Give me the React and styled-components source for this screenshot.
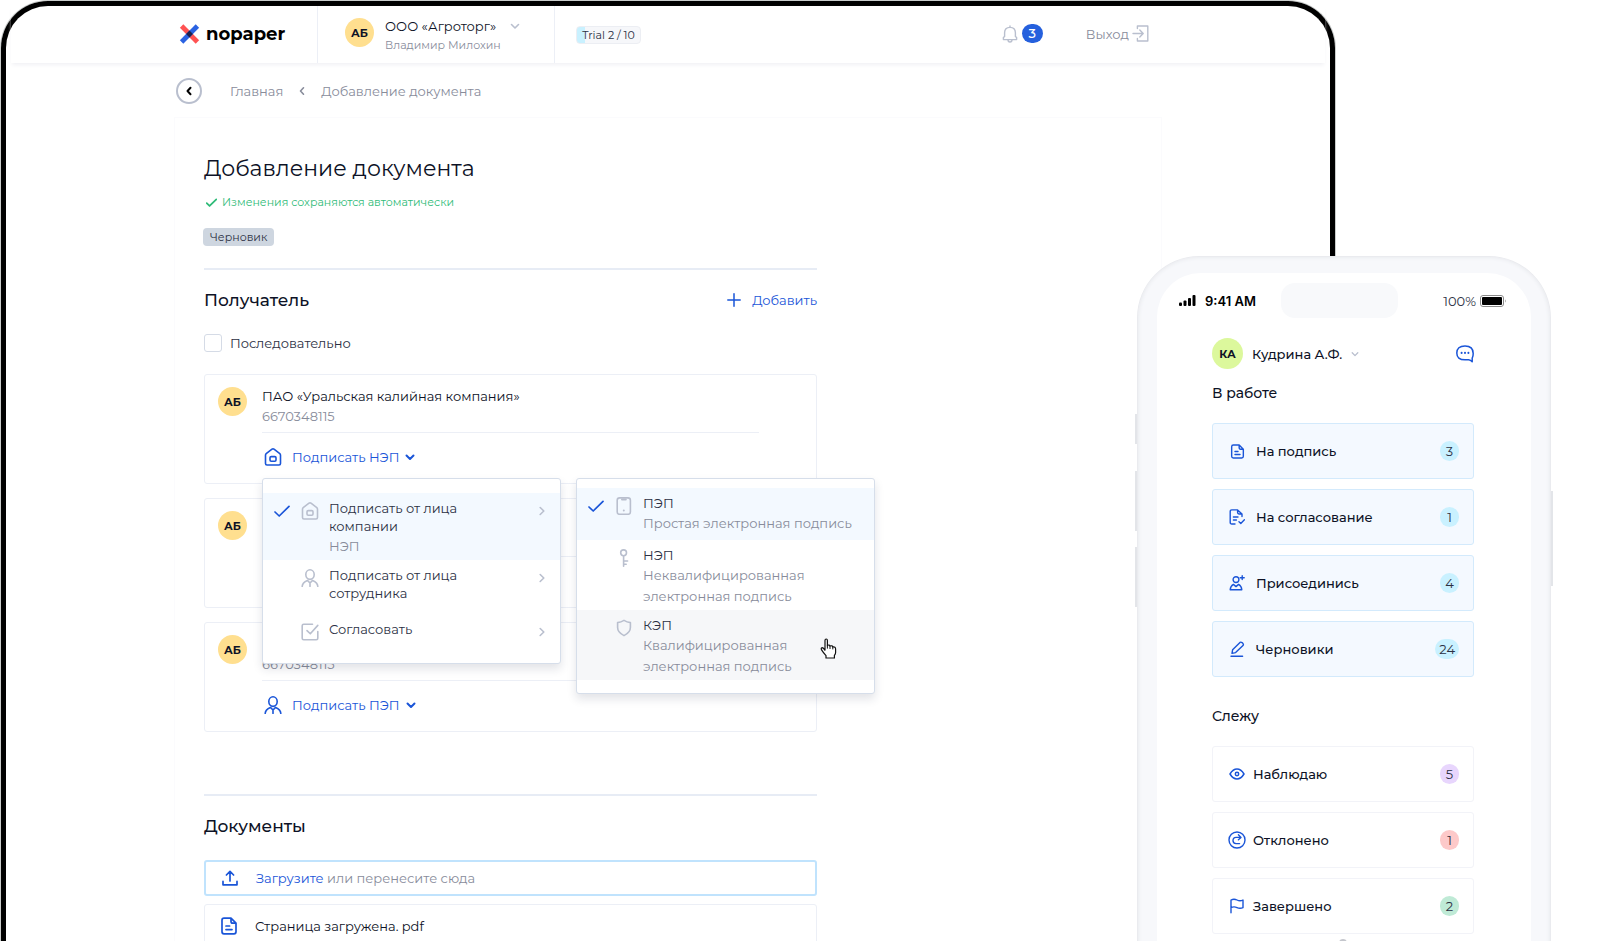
import React from "react";
import styled, { createGlobalStyle, css } from "styled-components";

const color = {
  ink: "#0d1226",
  text: "#2b3043",
  muted: "#888c9b",
  icon: "#b9bfce",
  blue: "#1a55d8",
  line: "#eceff6",
  green: "#2fbb78",
};

const GlobalStyle = createGlobalStyle`
  *, *::before, *::after { box-sizing: border-box; }
  body {
    margin: 0;
    background: #fff;
    color: ${color.ink};
    font-family: Montserrat, Inter, "Open Sans", sans-serif;
    font-size: 13px;
    line-height: 20px;
  }
  h1, h2, h3, p, ul { margin: 0; padding: 0; font-weight: 400; }
  ul { list-style: none; }
  button { font: inherit; color: inherit; background: none; border: 0; padding: 0; cursor: pointer; text-align: left; }
  a { color: inherit; text-decoration: none; }
  svg { display: block; flex: none; }
`;

/* ---------- icons ---------- */

const Glyph = styled.svg.attrs({ "aria-hidden": true })`
  fill: none;
  stroke: currentColor;
  stroke-width: ${(p) => p.$weight || 1.6};
  stroke-linecap: round;
  stroke-linejoin: round;
`;

const Icon = ({ size = 18, box = 18, weight, children }) => (
  <Glyph width={size} height={size} viewBox={`0 0 ${box} ${box}`} $weight={weight}>
    {children}
  </Glyph>
);

const LogoMark = () => (
  <svg width="21" height="20" viewBox="0 0 21 20" aria-hidden="true">
    <path d="M2.6 2 18.4 18" stroke="#ff5252" strokeWidth="4.8" strokeLinecap="butt" />
    <path d="M18.4 2 2.6 18" stroke="#2a62e2" strokeWidth="4.8" strokeLinecap="butt" />
    <path d="M10.5 6.6 13.9 10 10.5 13.4 7.1 10Z" fill="#1c2150" />
  </svg>
);

const Chevron = ({ dir = "down", size = 10, weight = 1.6 }) => {
  const paths = {
    down: "M1.5 3.5 5 7 8.5 3.5",
    left: "M6.5 1.8 3.5 5 6.5 8.2",
    right: "M3.2 1.5 6.8 5 3.2 8.5",
  };
  return (
    <Icon size={size} box={10} weight={weight}>
      <path d={paths[dir]} />
    </Icon>
  );
};

const Check = ({ size = 16, weight = 1.7 }) => (
  <Icon size={size} box={16} weight={weight}>
    <path d="M1 9 5.2 13 15 3.4" />
  </Icon>
);

const House = () => (
  <Icon>
    <path d="M1.5 7.2Q1.5 6.3 2.2 5.7L8 1.2Q9 .5 10 1.2L15.8 5.7Q16.5 6.3 16.5 7.2V15.5Q16.5 17 15 17H3Q1.5 17 1.5 15.5Z" />
    <rect x="6" y="8.6" width="6" height="4.6" rx="1.2" />
  </Icon>
);

const Person = () => (
  <Icon>
    <ellipse cx="9" cy="5.6" rx="4.2" ry="4.8" />
    <path d="M1.2 17.4Q1.4 13.4 6.4 11.4L9 14 11.6 11.4Q16.6 13.4 16.8 17.4M9 14V17.4" />
  </Icon>
);

const TickBox = () => (
  <Icon>
    <path d="M11.5 1.2H2.7Q1.2 1.2 1.2 2.7V15.3Q1.2 16.8 2.7 16.8H15.3Q16.8 16.8 16.8 15.3V8.5M6 7.6 9.3 10.8 16.8 2.4" />
  </Icon>
);

const PhoneGlyph = () => (
  <Icon>
    <rect x="2.2" y=".9" width="13.2" height="16.4" rx="2.4" />
    <path d="M7 2.4H10.8M8.8 13.4V13.5" strokeWidth="2" />
  </Icon>
);

const KeyGlyph = () => (
  <Icon>
    <circle cx="8.6" cy="3.8" r="2.9" />
    <path d="M8.6 6.8V17.2M8.6 12H12.6M8.6 15.2H11.2" />
  </Icon>
);

const ShieldGlyph = () => (
  <Icon>
    <path d="M9 1.4Q12 3.2 15.4 3.6V8.6Q15.4 13.6 9 16.6Q2.6 13.6 2.6 8.6V3.6Q6 3.2 9 1.4Z" />
  </Icon>
);

const DocGlyph = ({ size = 18 }) => (
  <Icon size={size} weight={1.7}>
    <path d="M11 1.2H4Q2 1.2 2 3.2V14.8Q2 16.8 4 16.8H14Q16 16.8 16 14.8V6.2L11 1.2V4.6Q11 6.2 12.6 6.2H16M6 9H9.6M6 12.6H12" />
  </Icon>
);

const UploadGlyph = () => (
  <Icon size={16} box={16} weight={1.7}>
    <path d="M8 11V1.6M4.4 5 8 1.4 11.6 5M1 11.4V14.8H15V11.4" />
  </Icon>
);

const BellGlyph = () => (
  <Icon size={18} weight={1.4}>
    <path d="M9 1V2.4M2.4 14.6V12.6L3.6 11.4V7.8Q3.6 2.4 9 2.4T14.4 7.8V11.4L15.6 12.6V14.6ZM7 14.8Q7 17 9 17T11 14.8" />
  </Icon>
);

const ExitGlyph = () => (
  <Icon size={17} box={17} weight={1.4}>
    <path d="M5.4 3.6V1H15.8V16H5.4V13.4M1 8.5H11M7.8 5 11.2 8.5 7.8 12" />
  </Icon>
);

const PlusGlyph = () => (
  <Icon size={14} box={14} weight={1.5}>
    <path d="M7 .8V13.2M.8 7H13.2" />
  </Icon>
);

const DocCheckGlyph = () => (
  <Icon size={16} box={16} weight={1.4}>
    <path d="M6 15H2.8Q1.2 15 1.2 13.4V2.4Q1.2.9 2.8.9H8.6L13 5V7.6M8.6.9V3.6Q8.6 5 10 5H13M4.4 8H9M4.4 11H7.4M10 12.8 11.8 14.4 15.4 10.8" />
  </Icon>
);

const AddPersonGlyph = () => (
  <Icon size={16} box={16} weight={1.4}>
    <circle cx="7" cy="4.6" r="2.9" />
    <path d="M13.2.8V4.6M11.2 2.7H15.2M4.4 9.4Q1.4 11 1.2 14.8H12.8Q12.6 11 9.6 9.4L7 11.6Z" />
  </Icon>
);

const PencilGlyph = () => (
  <Icon size={16} box={16} weight={1.4}>
    <path d="M2 15.2H13.6M3.6 8.8 11 1.4Q12 .8 13 1.6L14 2.6Q14.8 3.6 14 4.4L6.6 11.6 3 12.4Z" />
  </Icon>
);

const EyeGlyph = () => (
  <Icon size={16} box={16} weight={1.5}>
    <path d="M1 8Q4 3 8 3T15 8Q12 13 8 13T1 8Z" />
    <circle cx="8" cy="8" r="1.7" />
  </Icon>
);

const RedoGlyph = () => (
  <Icon size={18} weight={1.4}>
    <circle cx="9" cy="9" r="8" />
    <path d="M11.6 12.6H8Q5 12.4 5 9.4T8 6.4H12.6M10.4 3.8 13 6.4 10.4 8.8" />
  </Icon>
);

const FlagGlyph = () => (
  <Icon size={16} box={16} weight={1.4}>
    <path d="M2 14.8V2Q5 .4 8 2T14 2V9.6Q11 11 8 9.6T2 9.6" />
  </Icon>
);

const ChatGlyph = () => (
  <Icon size={18} weight={1.5}>
    <path d="M16.2 16.8V13.2Q17.2 11.4 17.2 8.4Q17.2 1 9 1T.8 8Q.8 14.8 9 14.8H12.6Q14.6 15 16.2 16.8Z" />
    <path d="M5.6 7.8V7.9M9 7.8V7.9M12.4 7.8V7.9" strokeWidth="2" />
  </Icon>
);

const SignalGlyph = () => (
  <svg width="17" height="11" viewBox="0 0 17 11" aria-hidden="true">
    <rect x="0" y="7.5" width="3" height="3.5" rx="1" />
    <rect x="4.5" y="5.5" width="3" height="5.5" rx="1" />
    <rect x="9" y="3" width="3" height="8" rx="1" />
    <rect x="13.5" y="0" width="3" height="11" rx="1" />
  </svg>
);

const BatteryGlyph = () => (
  <svg width="27" height="12" viewBox="0 0 27 12" aria-hidden="true">
    <rect x=".5" y=".5" width="23" height="11" rx="2.5" fill="none" stroke="#8a8a8a" />
    <rect x="2" y="2" width="20" height="8" rx="1" />
    <path d="M25 4.2Q26.6 6 25 7.8Z" fill="#8a8a8a" />
  </svg>
);

const HandCursor = styled((props) => (
  <svg width="17" height="21" viewBox="0 0 17 21" aria-hidden="true" {...props}>
    <path
      d="M5 12.6V2.4Q5 1 6.2 1T7.4 2.4V7.4Q9.6 6.4 10 8Q12.4 7.2 12.8 9Q15.6 8.4 15.6 11V14.4Q15.6 16 14.4 17.4V20H6V17.6Q3.4 14.8 1.4 11.6Q.8 10 2.2 9.6Q3.6 9.6 5 12.6Z"
      fill="#fff"
      stroke="#111"
      strokeWidth="1.2"
    />
    <path d="M7.4 7.4V10.6M10 8V11M12.8 9V11.4" stroke="#111" />
  </svg>
))`
  position: absolute;
  right: 37px;
  top: 28px;
`;

/* ---------- shared parts ---------- */

const Avatar = styled.span`
  display: flex;
  align-items: center;
  justify-content: center;
  flex: none;
  width: ${(p) => p.$size || 29}px;
  height: ${(p) => p.$size || 29}px;
  border-radius: 50%;
  background: ${(p) => p.$bg || "#ffdf8f"};
  font-size: 11px;
  font-weight: 700;
`;

/* ---------- stage ---------- */

const Stage = styled.div`
  display: grid;
  grid-template-columns: minmax(0, 1fr) 198px 216px;
  height: 100vh;
  padding: 0 49px 0 1px;
  overflow: hidden;
`;

const Tablet = styled.div`
  grid-area: 1 / 1 / 2 / 3;
  margin-top: 1px;
  border: 5px solid #000;
  border-bottom: 0;
  border-radius: 47px 47px 0 0;
  box-shadow: 0 0 0 1px #c9cccb;
`;

const TopBar = styled.header`
  display: flex;
  height: 57px;
  margin: 0 5px;
  padding: 0 163px 0 164px;
  box-shadow: 0 3px 4px -1px #f1f1f5;
`;

const Brand = styled.a`
  display: flex;
  align-items: center;
  gap: 6px;
  width: 143px;
  padding: 0 0 2px 4px;
  border-right: 1px solid ${color.line};
  color: #000;
  font-size: 18px;
  font-weight: 700;
`;

const OrgSwitch = styled.button`
  display: flex;
  align-items: center;
  gap: 11px;
  width: 237px;
  padding: 0 0 4px 27px;
  border-right: 1px solid ${color.line};
`;

const OrgText = styled.span`
  display: flex;
  flex-direction: column;
  padding-top: 4px;
`;

const OrgName = styled.span`
  display: flex;
  align-items: center;
  gap: 14px;

  svg { color: ${color.icon}; }
`;

const OrgUser = styled.small`
  font-size: 11px;
  line-height: 18px;
  color: ${color.muted};
`;

const Trial = styled.span`
  align-self: center;
  margin-left: 21px;
  width: 65px;
  border: 1px solid #eceef3;
  border-radius: 4px;
  background: linear-gradient(90deg, #c9f1ff 8px, #f6f7fa 8px);
  font-size: 11px;
  line-height: 16px;
  text-align: center;
  color: ${color.text};
`;

const TopActions = styled.div`
  display: flex;
  align-items: center;
  gap: 43px;
  margin: 0 13px 0 auto;
  padding-bottom: 2px;
  color: ${color.muted};

  svg { color: ${color.icon}; }
`;

const TopButton = styled.button`
  display: flex;
  align-items: center;
  gap: 3px;
`;

const Unread = styled.span`
  width: 21px;
  border-radius: 10px;
  background: #2560dd;
  color: #fff;
  font-weight: 500;
  line-height: 19px;
  text-align: center;
`;

const Crumbs = styled.nav`
  display: flex;
  align-items: center;
  margin: 15px 168px 13px 170px;
  gap: 14px;
  color: ${color.muted};

  > svg { color: ${color.muted}; }
`;

const BackButton = styled.button`
  display: flex;
  align-items: center;
  justify-content: center;
  width: 26px;
  height: 26px;
  margin-right: 14px;
  border: 2px solid ${color.icon};
  border-radius: 50%;

  svg { color: #000; }
`;

const Sheet = styled.main`
  margin: 0 168px;
  padding: 35px 29px;
  border: 1px solid #fbfbfd;
  border-bottom: 0;
`;

const Column = styled.div`
  max-width: 613px;
`;

const Title = styled.h1`
  font-size: 22px;
  line-height: 32px;
`;

const Saved = styled.p`
  display: flex;
  align-items: center;
  gap: 5px;
  margin-top: 9px;
  padding-left: 2px;
  font-size: 11px;
  line-height: 16px;
  color: ${color.green};
`;

const Draft = styled.span`
  display: inline-block;
  margin: 18px 0 0 -1px;
  padding: 0 7px;
  border-radius: 4px;
  background: #ced6e0;
  font-size: 11px;
  line-height: 18px;
  color: ${color.text};
  vertical-align: top;
`;

const Section = styled.section`
  margin-top: ${(p) => p.$gap}px;
  border-top: 2px solid #e7ecf5;
  padding-top: 18px;
`;

const SectionHead = styled.div`
  display: flex;
  justify-content: space-between;
  align-items: center;
  margin-bottom: 22px;
`;

const SectionTitle = styled.h2`
  font-size: 17px;
  font-weight: 500;
  line-height: 24px;
`;

const AddButton = styled.button`
  display: flex;
  align-items: center;
  gap: 11px;
  color: ${color.blue};
`;

const CheckLabel = styled.label`
  display: flex;
  align-items: center;
  gap: 8px;
  height: 18px;
  margin-bottom: 22px;
  color: ${color.text};
`;

const Checkbox = styled.input`
  appearance: none;
  width: 18px;
  height: 18px;
  margin: 0;
  border: 1px solid #d5dbe6;
  border-radius: 3px;
  background: #fff;
`;

const Recipients = styled.ul`
  display: grid;
  gap: 14px;
`;

const Recipient = styled.li`
  display: flex;
  gap: 15px;
  padding: 11px 57px 16px 13px;
  border: 1px solid ${color.line};
  border-radius: 3px;

  > ${Avatar} { margin-top: 1px; }
`;

const RecipientBody = styled.div`
  flex: 1;
`;

const RecipientInfo = styled.div`
  padding-bottom: 6px;
  border-bottom: 1px solid ${color.line};
`;

const Inn = styled.p`
  color: ${color.muted};
`;

const SignArea = styled.div`
  position: relative;
  margin-top: 14px;
`;

const SignButton = styled.button`
  display: flex;
  align-items: center;
  gap: 6px;
  height: 20px;
  padding-left: 2px;
  color: ${color.blue};

  > svg:first-child { margin-right: 4px; }
`;

const Menu = styled.div`
  position: absolute;
  z-index: 2;
  top: 31px;
  left: ${(p) => p.$left}px;
  width: 299px;
  padding: ${(p) => p.$top}px 0 13px;
  border: 1px solid #d6deea;
  border-radius: 3px;
  background: #fff;
  box-shadow: 0 5px 10px rgba(30, 40, 70, 0.13);
`;

const MenuItem = styled.button`
  position: relative;
  display: grid;
  grid-template-columns: 16px 18px 1fr auto;
  align-items: start;
  width: 100%;
  min-height: ${(p) => p.$min}px;
  padding: 6px 13px 3px 11px;
  color: ${color.icon};
  ${(p) => p.$tone && css`background: ${p.$tone};`}
`;

const MenuCheck = styled.span`
  padding-top: 4px;
  color: ${color.blue};
`;

const MenuIcon = styled.span`
  margin-left: 11px;
  padding-top: 3px;
`;

const MenuText = styled.span`
  margin-left: 21px;
  line-height: 18px;
  color: ${color.text};
`;

const MenuNote = styled.small`
  display: block;
  margin-top: 1px;
  font-size: 13px;
  line-height: 21px;
  color: ${color.muted};
`;

const MenuArrow = styled.span`
  padding-top: 7px;
`;

const FileRow = styled.div`
  display: flex;
  align-items: center;
  gap: 17px;
  height: ${(p) => (p.$drop ? 36 : 44)}px;
  margin-top: ${(p) => (p.$drop ? 0 : 8)}px;
  padding-left: 15px;
  border: ${(p) => (p.$drop ? "2px solid #c0e3fd" : `1px solid ${color.line}`)};
  border-radius: 3px;

  > svg { width: 18px; color: ${color.blue}; }
`;

const Hint = styled.p`
  color: ${color.muted};
`;

const LinkButton = styled.button`
  color: ${color.blue};
`;

/* ---------- phone ---------- */

const Phone = styled.aside`
  position: relative;
  z-index: 3;
  grid-area: 1 / 2 / 2 / 4;
  margin-top: 256px;
  padding: 16px 19px 0;
  border: 1px solid #eaebef;
  border-bottom: 0;
  border-radius: 62px 62px 0 0;
  background: #f7f8fb;
  box-shadow: inset 0 0 4px #e4e6ea;
`;

const SideKey = styled.span`
  position: absolute;
  top: ${(p) => p.$top}px;
  ${(p) => p.$side}: -3px;
  width: 2px;
  height: ${(p) => p.$length}px;
  background: #e3e5e9;
`;

const Screen = styled.div`
  height: 100%;
  padding-top: 10px;
  border-radius: 44px 44px 0 0;
  background: #fff;
`;

const StatusBar = styled.div`
  display: grid;
  grid-template-columns: 102px 117px 1fr;
  align-items: center;
  padding: 0 24px 0 22px;
`;

const Clock = styled.span`
  display: flex;
  align-items: center;
  gap: 9px;
  color: #000;
  font-family: Inter, Roboto, sans-serif;
  font-size: 13px;
  font-weight: 600;
  white-space: nowrap;
`;

const Island = styled.span`
  height: 35px;
  border-radius: 14px;
  background: #f8f9fb;
`;

const Battery = styled.span`
  display: flex;
  align-items: center;
  justify-content: flex-end;
  gap: 4px;
  color: ${color.text};
`;

const PhoneBody = styled.div`
  padding: 20px 57px 0 55px;
`;

const UserRow = styled.div`
  display: flex;
  align-items: center;
  justify-content: space-between;
  color: ${color.blue};
`;

const UserButton = styled.button`
  display: flex;
  align-items: center;
  gap: 9px;
  font-weight: 500;
  color: ${color.ink};

  svg { color: ${color.icon}; }
`;

const ListTitle = styled.h3`
  margin: ${(p) => p.$gap}px 0 20px;
  font-size: 14px;
  font-weight: 500;
`;

const TileList = styled.ul`
  display: grid;
  gap: 10px;
`;

const Tile = styled.a`
  display: flex;
  align-items: center;
  height: 56px;
  padding: 0 14px 0 15px;
  border: 1px solid ${(p) => (p.$filled ? "#d3eafc" : "#f2f3f8")};
  border-radius: 3px;
  background: ${(p) => (p.$filled ? "#f4f9ff" : "#fff")};
  font-weight: 500;
`;

const TileIcon = styled.span`
  display: flex;
  justify-content: center;
  width: 18px;
  margin-right: ${(p) => (p.$filled ? 10 : 7)}px;
  color: ${color.blue};
`;

const Count = styled.span`
  min-width: 19px;
  margin-left: auto;
  padding: 0 4px;
  border-radius: 10px;
  background: ${(p) => p.$bg};
  font-weight: 400;
  line-height: 20px;
  text-align: center;
  color: ${color.text};
`;

const Handle = styled.span`
  display: block;
  width: 8px;
  height: 8px;
  margin: 5px auto 0;
  border-radius: 4px;
  background: #c4c6cc;
`;

/* ---------- data ---------- */

const recipients = [
  { id: 1, kind: "НЭП", icon: <House />, open: true },
  { id: 2, kind: "НЭП", icon: <House /> },
  { id: 3, kind: "ПЭП", icon: <Person /> },
];

const signerItems = [
  { icon: <House />, title: ["Подписать от лица", "компании"], note: ["НЭП"], checked: true, tone: "#f3f9ff", min: 67 },
  { icon: <Person />, title: ["Подписать от лица", "сотрудника"], min: 54 },
  { icon: <TickBox />, title: ["Согласовать"], min: 36 },
];

const signatureItems = [
  { icon: <PhoneGlyph />, title: ["ПЭП"], note: ["Простая электронная подпись"], checked: true, tone: "#f3f9ff", min: 52 },
  { icon: <KeyGlyph />, title: ["НЭП"], note: ["Неквалифицированная", "электронная подпись"], min: 70 },
  { icon: <ShieldGlyph />, title: ["КЭП"], note: ["Квалифицированная", "электронная подпись"], tone: "#f6f7f9", min: 70, hovered: true },
];

const inWork = [
  { icon: <DocGlyph size={15} />, label: "На подпись", count: 3 },
  { icon: <DocCheckGlyph />, label: "На согласование", count: 1 },
  { icon: <AddPersonGlyph />, label: "Присоединись", count: 4 },
  { icon: <PencilGlyph />, label: "Черновики", count: 24 },
];

const watching = [
  { icon: <EyeGlyph />, label: "Наблюдаю", count: 5, bg: "#e8d6fd" },
  { icon: <RedoGlyph />, label: "Отклонено", count: 1, bg: "#fdc9c9" },
  { icon: <FlagGlyph />, label: "Завершено", count: 2, bg: "#bfead6" },
];

const lines = (parts) =>
  parts.map((part, i) => (
    <React.Fragment key={part}>
      {i > 0 && <br />}
      {part}
    </React.Fragment>
  ));

const SignMenu = ({ items, left, top, arrows }) => (
  <Menu role="menu" $left={left} $top={top}>
    {items.map((item) => (
      <MenuItem key={item.title.join()} role="menuitem" type="button" $tone={item.tone} $min={item.min}>
        <MenuCheck>{item.checked && <Check />}</MenuCheck>
        <MenuIcon>{item.icon}</MenuIcon>
        <MenuText>
          {lines(item.title)}
          {item.note && <MenuNote>{lines(item.note)}</MenuNote>}
        </MenuText>
        {arrows && (
          <MenuArrow>
            <Chevron dir="right" />
          </MenuArrow>
        )}
        {item.hovered && <HandCursor />}
      </MenuItem>
    ))}
  </Menu>
);

const Tiles = ({ items, filled }) => (
  <TileList>
    {items.map((item) => (
      <li key={item.label}>
        <Tile href="#" $filled={filled}>
          <TileIcon $filled={filled}>{item.icon}</TileIcon>
          {item.label}
          <Count $bg={item.bg || "#c9f1ff"}>{item.count}</Count>
        </Tile>
      </li>
    ))}
  </TileList>
);

export default function App() {
  return (
    <>
      <GlobalStyle />
      <Stage>
        <Tablet>
          <TopBar>
            <Brand href="#">
              <LogoMark />
              nopaper
            </Brand>
            <OrgSwitch type="button">
              <Avatar>АБ</Avatar>
              <OrgText>
                <OrgName>
                  ООО «Агроторг»
                  <Chevron />
                </OrgName>
                <OrgUser>Владимир Милохин</OrgUser>
              </OrgText>
            </OrgSwitch>
            <Trial>Trial 2 / 10</Trial>
            <TopActions>
              <TopButton type="button" aria-label="Уведомления">
                <BellGlyph />
                <Unread>3</Unread>
              </TopButton>
              <TopButton type="button">
                Выход
                <ExitGlyph />
              </TopButton>
            </TopActions>
          </TopBar>

          <Crumbs>
            <BackButton type="button" aria-label="Назад">
              <Chevron dir="left" weight={2} />
            </BackButton>
            <a href="#">Главная</a>
            <Chevron dir="left" />
            <a href="#">Добавление документа</a>
          </Crumbs>

          <Sheet>
            <Column>
              <Title>Добавление документа</Title>
              <Saved>
                <Check size={11} weight={2.6} />
                Изменения сохраняются автоматически
              </Saved>
              <Draft>Черновик</Draft>

              <Section $gap={22}>
                <SectionHead>
                  <SectionTitle>Получатель</SectionTitle>
                  <AddButton type="button">
                    <PlusGlyph />
                    Добавить
                  </AddButton>
                </SectionHead>
                <CheckLabel>
                  <Checkbox type="checkbox" />
                  Последовательно
                </CheckLabel>
                <Recipients>
                  {recipients.map((r) => (
                    <Recipient key={r.id}>
                      <Avatar>АБ</Avatar>
                      <RecipientBody>
                        <RecipientInfo>
                          <p>ПАО «Уральская калийная компания»</p>
                          <Inn>6670348115</Inn>
                        </RecipientInfo>
                        <SignArea>
                          <SignButton type="button">
                            {r.icon}
                            Подписать {r.kind}
                            <Chevron weight={2} />
                          </SignButton>
                          {r.open && (
                            <>
                              <SignMenu items={signerItems} left={0} top={14} arrows />
                              <SignMenu items={signatureItems} left={314} top={9} />
                            </>
                          )}
                        </SignArea>
                      </RecipientBody>
                    </Recipient>
                  ))}
                </Recipients>
              </Section>

              <Section $gap={62}>
                <SectionHead>
                  <SectionTitle>Документы</SectionTitle>
                </SectionHead>
                <FileRow $drop>
                  <UploadGlyph />
                  <Hint>
                    <LinkButton type="button">Загрузите</LinkButton> или перенесите сюда
                  </Hint>
                </FileRow>
                <FileRow>
                  <DocGlyph />
                  <p>Страница загружена. pdf</p>
                </FileRow>
              </Section>
            </Column>
          </Sheet>
        </Tablet>

        <Phone>
          <SideKey $side="left" $top={157} $length={30} />
          <SideKey $side="left" $top={214} $length={60} />
          <SideKey $side="left" $top={290} $length={60} />
          <SideKey $side="right" $top={234} $length={95} />
          <Screen>
            <StatusBar>
              <Clock>
                <SignalGlyph />
                9:41 AM
              </Clock>
              <Island />
              <Battery>
                100%
                <BatteryGlyph />
              </Battery>
            </StatusBar>
            <PhoneBody>
              <UserRow>
                <UserButton type="button">
                  <Avatar $size={31} $bg="#dcf89c">КА</Avatar>
                  Кудрина А.Ф.
                  <Chevron size={8} />
                </UserButton>
                <ChatGlyph />
              </UserRow>
              <ListTitle $gap={14}>В работе</ListTitle>
              <Tiles items={inWork} filled />
              <ListTitle $gap={29}>Слежу</ListTitle>
              <Tiles items={watching} />
              <Handle />
            </PhoneBody>
          </Screen>
        </Phone>
      </Stage>
    </>
  );
}
